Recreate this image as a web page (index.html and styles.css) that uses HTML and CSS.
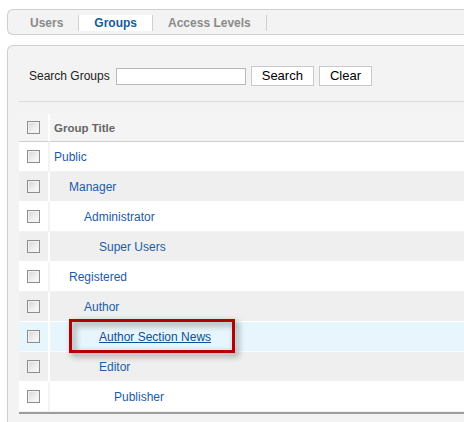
FILE: index.html
```html
<!DOCTYPE html>
<html lang="en">
<head>
<meta charset="utf-8">
<title>Groups</title>
<link rel="stylesheet" href="styles.css">
</head>
<body>
<div class="page">
  <nav class="tabs">
    <ul class="tab-list">
      <li class="tab">Users</li>
      <li class="tab active">Groups</li>
      <li class="tab">Access Levels</li>
    </ul>
  </nav>
  <section class="panel">
    <form class="filter">
      <label class="filter-label" for="search">Search Groups</label>
      <input class="filter-input" id="search" type="text">
      <button class="btn btn-search" type="button">Search</button>
      <button class="btn btn-clear" type="button">Clear</button>
    </form>
    <div class="rule"></div>
    <table class="list">
      <thead>
        <tr>
          <th class="col-check"><input class="check" type="checkbox"></th>
          <th class="col-title">Group Title</th>
        </tr>
      </thead>
      <tbody>
        <tr class="row-a"><td class="col-check"><input class="check" type="checkbox"></td><td class="col-title lvl-0"><a href="#">Public</a></td></tr>
        <tr class="row-b"><td class="col-check"><input class="check" type="checkbox"></td><td class="col-title lvl-1"><a href="#">Manager</a></td></tr>
        <tr class="row-a"><td class="col-check"><input class="check" type="checkbox"></td><td class="col-title lvl-2"><a href="#">Administrator</a></td></tr>
        <tr class="row-b"><td class="col-check"><input class="check" type="checkbox"></td><td class="col-title lvl-3"><a href="#">Super Users</a></td></tr>
        <tr class="row-a"><td class="col-check"><input class="check" type="checkbox"></td><td class="col-title lvl-1"><a href="#">Registered</a></td></tr>
        <tr class="row-b"><td class="col-check"><input class="check" type="checkbox"></td><td class="col-title lvl-2"><a href="#">Author</a></td></tr>
        <tr class="row-hover"><td class="col-check"><input class="check" type="checkbox"></td><td class="col-title lvl-3"><a class="hovered" href="#">Author Section News</a><span class="callout"></span></td></tr>
        <tr class="row-b"><td class="col-check"><input class="check" type="checkbox"></td><td class="col-title lvl-3"><a href="#">Editor</a></td></tr>
        <tr class="row-a"><td class="col-check"><input class="check" type="checkbox"></td><td class="col-title lvl-4"><a href="#">Publisher</a></td></tr>
      </tbody>
    </table>
  </section>
</div>
</body>
</html>
```
FILE: styles.css
```css
html, body {
  margin: 0;
  padding: 0;
  background: #fff;
  overflow: hidden;
}
body {
  font-family: "Liberation Sans", Arial, sans-serif;
  font-size: 12px;
  color: #222;
}
.page {
  width: 464px;
  height: 422px;
  overflow: hidden;
  padding: 9px 0 0 7px;
  box-sizing: border-box;
  display: flex;
  flex-direction: column;
}

/* Tabs */
.tabs {
  flex: none;
  height: 26px;
  box-sizing: border-box;
  border: 1px solid #cfcfcf;
  border-right: none;
  border-radius: 6px 0 0 6px;
  background: #f3f3f3;
  padding: 5px 0 0 7px;
}
.tab-list {
  display: flex;
  margin: 0;
  padding: 0;
  list-style: none;
}
.tab {
  height: 16px;
  line-height: 16px;
  padding: 0 15px;
  border-right: 1px solid #cfcfcf;
  font-weight: bold;
  font-size: 12px;
  color: #8a8a8a;
}
.tab.active {
  background: #fff;
  color: #135c9f;
}

/* Panel */
.panel {
  flex: 1;
  margin-top: 10px;
  border: 1px solid #cfcfcf;
  border-right: none;
  border-bottom: none;
  border-radius: 6px 0 0 0;
  background: #f3f3f3;
  overflow: hidden;
}
.filter {
  display: flex;
  align-items: center;
  height: 20px;
  margin: 0;
  padding: 20px 0 0 21px;
}
.filter-label {
  font-size: 12px;
  color: #222;
  margin-right: 6px;
}
.filter-input {
  width: 130px;
  height: 17px;
  box-sizing: border-box;
  border: 1px solid #b9b9b9;
  background: #fff;
  margin: 0 5px 0 0;
  padding: 0;
}
.btn {
  height: 20px;
  box-sizing: border-box;
  border: 1px solid #c9c9c9;
  background: #fff;
  font-family: "Liberation Sans", Arial, sans-serif;
  font-size: 13px;
  color: #000;
  padding: 0 10px;
  margin: 0 5px 0 0;
  line-height: 18px;
}
.rule {
  margin: 15px 0 0 11px;
  border-top: 1px solid #dcdcdc;
}

/* List table */
.list {
  margin: 12px 0 0 11px;
  width: calc(100% - 11px);
  border-collapse: separate;
  border-spacing: 0;
  border-bottom: 2px solid #9c9c9c;
}
.list th {
  height: 27px;
  padding: 0;
  background: #f4f4f4;
  border-bottom: 1px solid #cfcfcf;
  text-align: left;
  font-weight: bold;
  font-size: 11.5px;
  color: #666;
}
.list td {
  height: 29px;
  padding: 0;
  border-bottom: 1px solid #fff;
}
.list .col-check {
  width: 29px;
  border-right: 2px solid #fff;
}
.list th.col-title {
  padding-left: 4px;
}
.row-a td { background: #fff; border-bottom-color: #f3f3f3; }
.row-a td.col-check { border-right-color: #f3f3f3; }
.row-b td { background: #efefef; }
.row-hover td { background: #e7f5fd; border-bottom-color: #fafafa; }

.check {
  -webkit-appearance: none;
  appearance: none;
  display: block;
  width: 13px;
  height: 13px;
  margin: 0 auto;
  box-sizing: border-box;
  border: 1px solid #8e8e8e;
  background: linear-gradient(135deg, #d4d4d4 0%, #eeeeee 55%, #fbfbfb 100%);
  box-shadow: inset 0 0 0 1px #f2f2f2;
  border-radius: 0;
}

.col-title a {
  color: #1b5ca8;
  text-decoration: none;
  font-size: 12px;
}
.col-title a.hovered {
  color: #0f4f93;
  text-decoration: underline;
}
.list td.lvl-0 { padding-left: 4px; }
.list td.lvl-1 { padding-left: 19px; }
.list td.lvl-2 { padding-left: 34px; }
.list td.lvl-3 { padding-left: 49px; }
.list td.lvl-4 { padding-left: 64px; }

.row-hover .col-title {
  position: relative;
}
.callout {
  position: absolute;
  left: 19px;
  top: -3px;
  width: 166px;
  height: 34px;
  box-sizing: border-box;
  border: 3px solid #b30000;
  filter: drop-shadow(3px 3px 3px rgba(0, 0, 0, 0.45));
}
```
